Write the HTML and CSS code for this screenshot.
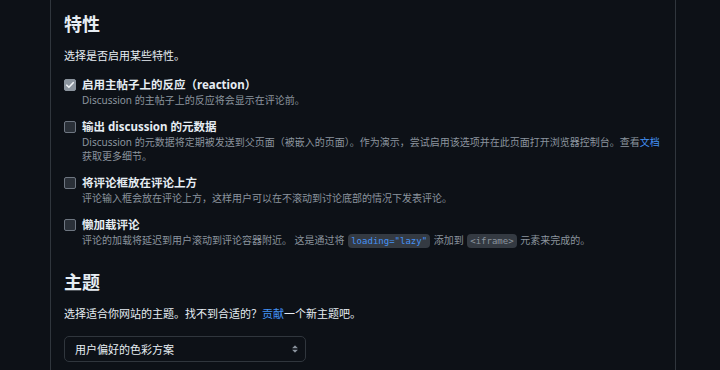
FILE: index.html
```html
<!DOCTYPE html>
<html>

<head>
    <title>设置</title>
    <meta content="width=device-width, initial-scale=1" name="viewport" />
    <meta http-equiv="Content-Type" content="text/html; charset=utf-8" />
    <link rel="stylesheet" href="styles.css">
</head>

<body>
    <div id="panel">
        <section class="section">
            <h2 class="section-title">特性</h2>
            <p class="section-intro">选择是否启用某些特性。</p>

            <div class="option">
                <span class="check checked">
                    <svg width="12" height="12" viewBox="0 0 12 12">
                        <path d="M2.8 6.2l2.1 2.1 4.3-4.6" fill="none" stroke="#f0f3f6" stroke-width="1.6" stroke-linecap="round" stroke-linejoin="round" />
                    </svg>
                </span>
                <div class="option-body">
                    <div class="option-label">启用主帖子上的反应（reaction）</div>
                    <div class="option-desc">Discussion 的主帖子上的反应将会显示在评论前。</div>
                </div>
            </div>

            <div class="option">
                <span class="check"></span>
                <div class="option-body">
                    <div class="option-label">输出 discussion 的元数据</div>
                    <div class="option-desc">Discussion 的元数据将定期被发送到父页面（被嵌入的页面）。作为演示，尝试启用该选项并在此页面打开浏览器控制台。查看<a href="#">文档</a>获取更多细节。</div>
                </div>
            </div>

            <div class="option">
                <span class="check"></span>
                <div class="option-body">
                    <div class="option-label">将评论框放在评论上方</div>
                    <div class="option-desc">评论输入框会放在评论上方，这样用户可以在不滚动到讨论底部的情况下发表评论。</div>
                </div>
            </div>

            <div class="option">
                <span class="check"></span>
                <div class="option-body">
                    <div class="option-label">懒加载评论</div>
                    <div class="option-desc">评论的加载将延迟到用户滚动到评论容器附近。 这是通过将 <code class="blue">loading="lazy"</code> 添加到 <code>&lt;iframe&gt;</code> 元素来完成的。</div>
                </div>
            </div>
        </section>

        <section class="section">
            <h2 class="section-title">主题</h2>
            <p class="section-intro">选择适合你网站的主题。找不到合适的？<a href="#">贡献</a>一个新主题吧。</p>
            <div class="select">
                <span>用户偏好的色彩方案</span>
                <svg width="12" height="12" viewBox="0 0 16 16">
                    <path fill="#8b949e" d="M4.427 9.427l3.396 3.396a.25.25 0 00.354 0l3.396-3.396A.25.25 0 0011.396 9H4.604a.25.25 0 00-.177.427zM4.427 6.573l3.396-3.396a.25.25 0 01.354 0l3.396 3.396A.25.25 0 0111.396 7H4.604a.25.25 0 01-.177-.427z" />
                </svg>
            </div>
        </section>
    </div>
</body>

</html>
```

FILE: styles.css
```css
* {
    margin: 0;
    padding: 0;
    box-sizing: border-box;
}

html,
body {
    background: #0d1117;
    color: #e6edf3;
    font-family: "Noto Sans", "Noto Sans CJK SC", sans-serif;
    height: 100%;
}

a {
    color: #4493f8;
    text-decoration: none;
}

#panel {
    border-left: 1px solid #30363d;
    border-right: 1px solid #30363d;
    margin-left: 50px;
    min-height: 100%;
    padding: 13px 8px 0 13px;
    width: 626px;
}

.section + .section {
    margin-top: 23px;
}

.section-title {
    font-size: 18px;
    font-weight: 700;
    line-height: 22px;
}

.section-intro {
    font-size: 11px;
    line-height: 16px;
    margin-top: 13px;
}

.option {
    display: flex;
    margin-top: 12px;
}

.section-intro + .option {
    margin-top: 13px;
}

.check {
    background: #2a3038;
    border: 1px solid #6e7681;
    border-radius: 2px;
    display: flex;
    flex: none;
    height: 12px;
    margin: 2px 6px 0 0;
    width: 12px;
}

.check.checked {
    background: #8b949e;
    border-color: #8b949e;
    align-items: center;
    justify-content: center;
}

.check svg {
    margin: -1px;
}

.option-body {
    flex: 1;
}

.option-label {
    font-size: 11.5px;
    font-weight: 700;
    line-height: 16px;
}

.option-desc {
    color: #8b949e;
    font-size: 10px;
    line-height: 14px;
}

code {
    background: #343a42;
    border-radius: 4px;
    color: #8b949e;
    font-family: "DejaVu Sans Mono", monospace;
    font-size: 9px;
    margin: 0 1px;
    padding: 2px 3px;
}

code.blue {
    color: #4493f8;
}

.select {
    align-items: center;
    border: 1px solid #30363d;
    border-radius: 5px;
    display: flex;
    font-size: 11px;
    height: 26px;
    justify-content: space-between;
    margin-top: 14px;
    padding: 0 4px 0 10px;
    width: 242px;
}
```
